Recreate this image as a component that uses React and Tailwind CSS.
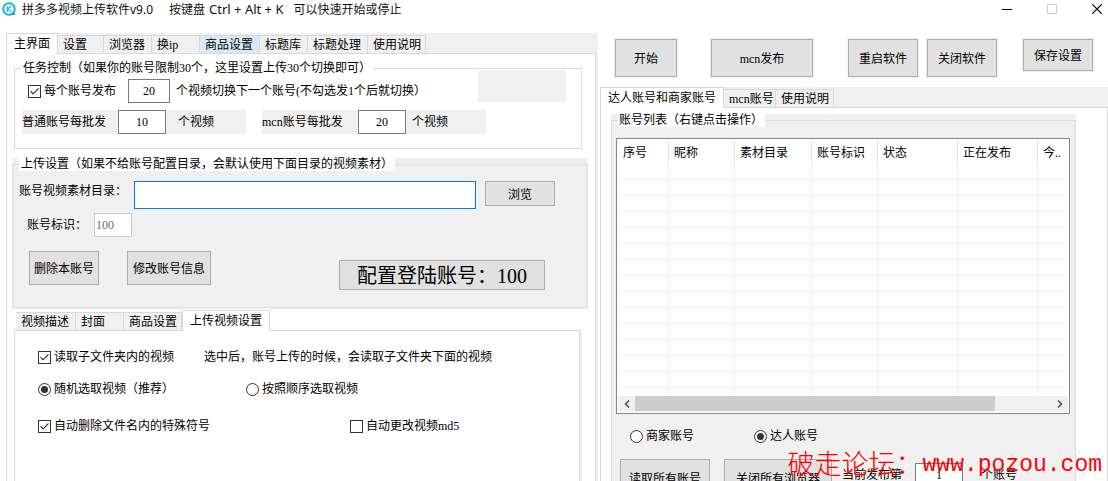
import { useState } from "react"
import { Check, ChevronLeft, ChevronRight } from "lucide-react"

const mainTabs = [
    { name: '主界面', width: 'w-[52px]' },
    { name: '设置', width: 'w-[46px]' },
    { name: '浏览器', width: 'w-12' },
    { name: '换ip', width: 'w-12' },
    { name: '商品设置', width: 'w-[60px]', hot: true },
    { name: '标题库', width: 'w-12' },
    { name: '标题处理', width: 'w-[60px]' },
    { name: '使用说明', width: 'w-[58px]' },
]

const videoTabs = [
    { name: '视频描述', width: 'w-[60px]' },
    { name: '封面', width: 'w-12' },
    { name: '商品设置', width: 'w-[58px]' },
    { name: '上传视频设置', width: 'w-[88px]' },
]

const accountTabs = [
    { name: '达人账号和商家账号', width: 'w-[124px]' },
    { name: 'mcn账号', width: 'w-[52px]' },
    { name: '使用说明', width: 'w-[58px]' },
]

const columns = [
    { name: '序号', width: 'w-[51px]' },
    { name: '昵称', width: 'w-[66px]' },
    { name: '素材目录', width: 'w-[77px]' },
    { name: '账号标识', width: 'w-[66px]' },
    { name: '状态', width: 'w-20' },
    { name: '正在发布', width: 'w-20' },
    { name: '今..', width: '' },
]

const Button = ({ className, children }) => (
    <button className={`shrink-0 whitespace-nowrap border border-[#adadad] bg-[#e1e1e1] pt-0.5 hover:border-[#0078d7] hover:bg-[#e5f1fb] ${className}`}>
        {children}
    </button>
)

const TabBar = ({ tabs, initial, className }) => {
    const [selected, setSelected] = useState(initial)

    return (
        <div className={`flex h-5 shrink-0 items-end ${className}`}>
            {tabs.map((tab) => (
                <button
                    key={tab.name}
                    onClick={() => setSelected(tab.name)}
                    className={`${tab.width} shrink-0 whitespace-nowrap border-[#d9d9d9] text-left ${selected === tab.name
                        ? 'z-10 -mb-px h-[21px] border-x border-t bg-white pl-[7px]'
                        : `h-[18px] border-t border-r pt-px pl-[5px] ${tab.hot ? 'bg-[#d8eaf9]' : 'bg-[#f0f0f0]'}`}`}
                >
                    {tab.name}
                </button>
            ))}
        </div>
    )
}

const Checkbox = ({ label, checked, className = '' }) => (
    <label className={`flex shrink-0 items-center gap-[3px] whitespace-nowrap ${className}`}>
        <span className="relative size-[13px]">
            <input type="checkbox" defaultChecked={checked} className="peer block size-[13px] appearance-none border border-[#333] bg-white" />
            <Check size={11} strokeWidth={2.4} className="pointer-events-none absolute top-px left-px hidden text-[#333] peer-checked:block" />
        </span>
        {label}
    </label>
)

const Radio = ({ label, name, checked, className = '' }) => (
    <label className={`flex shrink-0 items-center gap-[3px] whitespace-nowrap ${className}`}>
        <input
            type="radio"
            name={name}
            defaultChecked={checked}
            className="grid size-[13px] appearance-none place-items-center rounded-full border border-[#333] bg-white before:size-[7px] before:rounded-full before:content-[''] checked:before:bg-[#333]"
        />
        {label}
    </label>
)

const NumberBox = ({ value, label, className }) => (
    <input aria-label={label} defaultValue={value} className={`h-6 shrink-0 border border-[#7a7a7a] bg-white text-center outline-none ${className}`} />
)

const TitleBar = () => (
    <header className="flex h-[33px] shrink-0 items-start justify-between pr-1.5 pl-0.5 font-['Noto_Sans','Noto_Sans_CJK_SC',sans-serif]">
        <div className="flex h-[18px] items-center">
            <svg viewBox="0 0 15 15" className="mr-[5px] size-[15px]">
                <circle cx="7" cy="7" r="5.8" fill="none" stroke="#12b5e5" strokeWidth="2" />
                <path d="M5.3 4v6M9.3 4L5.8 7l3.5 3" fill="none" stroke="#19c3d8" strokeWidth="1.3" />
                <path d="M10.5 10.5L14 12.2l-4.2 1z" fill="#1583d8" />
            </svg>
            <h1 className="flex items-baseline whitespace-nowrap text-[#111]">
                <span className="mr-4">拼多多视频上传软件v9.0</span>
                <span className="mr-1">按键盘</span>
                <span className="mr-2.5 text-[13px]">Ctrl + Alt + K</span>
                <span>可以快速开始或停止</span>
            </h1>
        </div>
        <div className="flex h-[18px] items-center gap-[35px]">
            <button aria-label="最小化">
                <svg viewBox="0 0 10 10" className="size-[10px]" stroke="currentColor"><path d="M0 5.5h10" /></svg>
            </button>
            <button aria-label="最大化" disabled>
                <svg viewBox="0 0 10 10" className="size-[10px] text-[#ccc]" fill="none" stroke="currentColor"><path d="M.5.5h9v9h-9z" /></svg>
            </button>
            <button aria-label="关闭">
                <svg viewBox="0 0 10 10" className="size-[10px]" fill="none" stroke="currentColor" strokeWidth="1.2"><path d="M.3.3l9.4 9.4M9.7.3L.3 9.7" /></svg>
            </button>
        </div>
    </header>
)

const TaskControl = () => (
    <fieldset className="mr-[13px] ml-[7px] min-w-0 shrink-0 border border-[#dcdcdc] pb-[14px]">
        <legend className="ml-1.5 px-0.5 leading-[13px]">任务控制（如果你的账号限制30个，这里设置上传30个切换即可）</legend>
        <div className="flex items-start pt-1 pr-[15px] pl-[13px]">
            <div className="flex flex-1 items-center">
                <Checkbox label="每个账号发布" checked className="w-[100px]" />
                <NumberBox label="每个账号发布数量" value="20" className="w-[42px]" />
                <span className="ml-1.5 whitespace-nowrap">个视频切换下一个账号(不勾选发1个后就切换）</span>
            </div>
            <div className="-mt-[9px] h-8 w-[88px] shrink-0 bg-[#f0f0f0]" />
        </div>
        <div className="mt-[7px] flex gap-4 pl-[7px]">
            <div className="flex w-56 items-center bg-[#f0f0f0]">
                <span className="w-24">普通账号每批发</span>
                <NumberBox label="普通账号每批发数量" value="10" className="w-12" />
                <span className="ml-3">个视频</span>
            </div>
            <div className="flex w-56 items-center bg-[#f0f0f0]">
                <span className="w-24">mcn账号每批发</span>
                <NumberBox label="mcn账号每批发数量" value="20" className="w-12" />
                <span className="ml-1.5">个视频</span>
            </div>
        </div>
    </fieldset>
)

const UploadSettings = () => (
    <div className="mt-[9px] mr-[7px] ml-[5px] shrink-0 bg-[#f0f0f0] pb-px">
        <fieldset className="min-w-0 border border-[#dcdcdc] pb-[17px]">
            <legend className="ml-1.5 bg-white px-0.5 leading-[13px]">上传设置（如果不给账号配置目录，会默认使用下面目录的视频素材）</legend>
            <div className="flex items-start pt-[10px] pr-8 pl-1.5">
                <label htmlFor="folder" className="w-[115px] shrink-0 leading-5">账号视频素材目录：</label>
                <input id="folder" className="h-7 min-w-0 flex-1 border border-[#0078d7] bg-white px-1 outline-none" />
                <Button className="ml-[9px] h-[25px] w-[70px]">浏览</Button>
            </div>
            <div className="mt-1 flex items-center pl-[14px]">
                <label htmlFor="mark" className="w-[67px]">账号标识：</label>
                <input id="mark" defaultValue="100" disabled className="h-6 w-[38px] border border-[#ccc] bg-white pl-px text-[#6d6d6d]" />
            </div>
            <div className="mt-[14px] flex items-start pr-[42px] pl-4">
                <Button className="h-[34px] w-[70px]">删除本账号</Button>
                <Button className="ml-7 h-[34px] w-[84px]">修改账号信息</Button>
                <Button className="mt-[9px] ml-auto h-[30px] w-[206px] text-[20px]">配置登陆账号：100</Button>
            </div>
        </fieldset>
    </div>
)

const VideoSettings = () => (
    <div className="mt-px mr-[15px] ml-[7px] flex flex-1 flex-col">
        <TabBar tabs={videoTabs} initial="上传视频设置" className="pl-0.5" />
        <div className="flex-1 border-x border-t border-[#d9d9d9] bg-white pt-[18px] pl-[23px] shadow-[2px_0_0_#f0f0f0]">
            <div className="flex h-4 items-center">
                <Checkbox label="读取子文件夹内的视频" checked className="w-[166px]" />
                <span className="whitespace-nowrap">选中后，账号上传的时候，会读取子文件夹下面的视频</span>
            </div>
            <div className="mt-4 flex h-4 items-center">
                <Radio label="随机选取视频（推荐）" name="order" checked className="w-52" />
                <Radio label="按照顺序选取视频" name="order" />
            </div>
            <div className="mt-[21px] flex h-4 items-center">
                <Checkbox label="自动删除文件名内的特殊符号" checked className="w-[312px]" />
                <Checkbox label="自动更改视频md5" />
            </div>
        </div>
    </div>
)

const AccountTable = () => (
    <div className="border border-[#828790] bg-white p-px">
        <div className="h-[255px] overflow-hidden">
            <table className="w-full table-fixed border-separate border-spacing-0">
                <thead>
                    <tr>
                        {columns.map((col) => (
                            <th key={col.name} className={`${col.width} h-6 border-r border-[#e5e5e5] p-0 pt-0.5 pl-[5px] text-left font-normal whitespace-nowrap last:border-r-0`}>{col.name}</th>
                        ))}
                    </tr>
                </thead>
                <tbody>
                    {Array(15).fill('').map((_, index) => (
                        <tr key={index}>
                            {columns.map((col) => (
                                <td key={col.name} className="h-4 border-r border-b border-[#f0f0f0] p-0 last:border-r-0" />
                            ))}
                        </tr>
                    ))}
                </tbody>
            </table>
        </div>
        {/* Horizontal scrollbar */}
        <div className="mt-px flex h-4 bg-[#f0f0f0] text-[#505050]">
            <button aria-label="向左" className="flex w-[17px] items-center justify-center"><ChevronLeft size={12} strokeWidth={3.5} /></button>
            <div className="flex-1"><div className="h-[15px] w-[86.5%] bg-[#cdcdcd]" /></div>
            <button aria-label="向右" className="flex w-[17px] items-center justify-center"><ChevronRight size={12} strokeWidth={3.5} /></button>
        </div>
    </div>
)

const AccountPanel = () => (
    <div className="flex-1 border border-[#d9d9d9] bg-white pt-1.5 pr-[31px] pl-[10px]">
        <div className="bg-[#f0f0f0]">
            <fieldset className="min-w-0 border border-[#dcdcdc] pr-[5px] pb-4 pl-1">
                <legend className="ml-0.5 bg-white pr-0.5 pl-px leading-[13px]">账号列表（右键点击操作）</legend>
                <div className="pt-[11px]">
                    <AccountTable />
                </div>
                <div className="mt-[14px] flex h-4 items-center pl-[14px]">
                    <Radio label="商家账号" name="accountType" className="w-[124px]" />
                    <Radio label="达人账号" name="accountType" checked />
                </div>
                <div className="mt-[15px] flex items-start pl-1">
                    <Button className="h-[38px] w-[90px]">读取所有账号</Button>
                    <Button className="ml-[14px] h-[38px] w-[108px]">关闭所有浏览器</Button>
                    <label className="mt-1 ml-[10px] flex items-center whitespace-nowrap">
                        <span className="w-[73px]">当前发布第</span>
                        <NumberBox value="1" className="w-12" />
                        <span className="ml-[18px]">个账号</span>
                    </label>
                </div>
            </fieldset>
        </div>
    </div>
)

export default function App() {
    return (
        <div className="relative flex h-screen flex-col overflow-hidden bg-white font-['Liberation_Serif','Noto_Sans_CJK_SC',serif] text-[12px] leading-4 text-black">
            <TitleBar />

            <main className="grid min-h-0 flex-1 grid-cols-[598fr_510fr]">
                <section className="flex min-w-0 flex-col pl-1.5">
                    <div className="flex flex-1 flex-col bg-[#f0f0f0] pr-0.5">
                        <TabBar tabs={mainTabs} initial="主界面" className="" />
                        <div className="flex flex-1 flex-col border-x border-t border-[#d9d9d9] bg-white pt-2">
                            <TaskControl />
                            <UploadSettings />
                            <VideoSettings />
                        </div>
                    </div>
                </section>

                <section className="flex min-w-0 flex-col pl-0.5">
                    <div className="flex shrink-0 items-start pt-1.5 pb-[10px] pl-[15px]">
                        <Button className="h-[38px] w-[62px] ring ring-[#f0f0f0]">开始</Button>
                        <Button className="ml-[34px] h-[38px] w-[102px] ring ring-[#f0f0f0]">mcn发布</Button>
                        <Button className="ml-[35px] h-[38px] w-[70px] ring ring-[#f0f0f0]">重启软件</Button>
                        <Button className="ml-[9px] h-[38px] w-[70px] ring ring-[#f0f0f0]">关闭软件</Button>
                        <Button className="ml-[26px] h-8 w-[70px] ring ring-[#f0f0f0]">保存设置</Button>
                    </div>
                    <TabBar tabs={accountTabs} initial="达人账号和商家账号" className="bg-[#f0f0f0]" />
                    <AccountPanel />
                </section>
            </main>

            {/* Watermark */}
            <p className="pointer-events-none absolute right-1.5 bottom-0 z-20 flex items-center text-[27px] leading-8 font-light whitespace-nowrap text-[#f00]">
                破走论坛：<span className="font-['Liberation_Mono',monospace] text-[23px]">www.pozou.com</span>
            </p>
        </div>
    )
}
